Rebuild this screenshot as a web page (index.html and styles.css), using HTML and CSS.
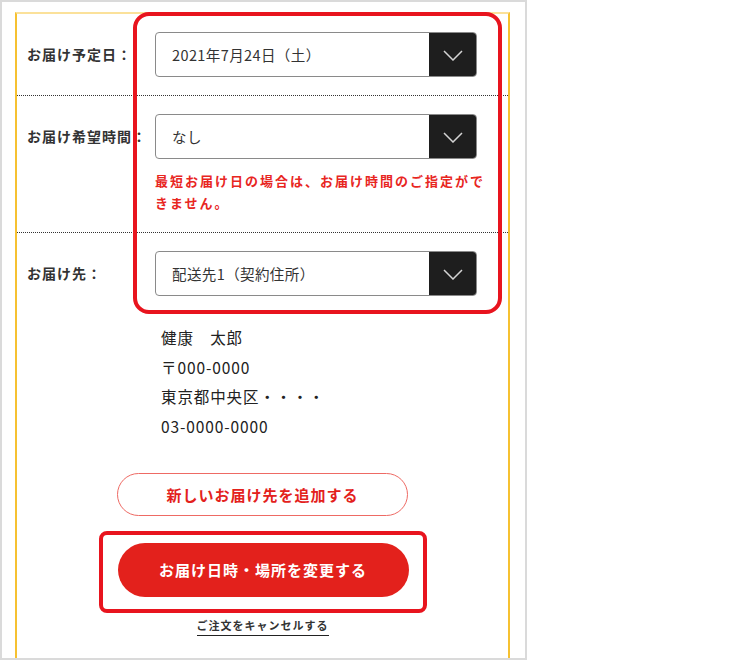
FILE: index.html
```html
<!DOCTYPE html>
<html lang="ja">
<head>
  <meta charset="UTF-8" />
  <meta name="viewport" content="width=device-width, initial-scale=1" />
  <title>お届け日時・場所の変更</title>
  <link rel="stylesheet" href="styles.css">
</head>
<body>
  <div class="frame">
    <div class="panel">
      <div class="row">
        <div class="label">お届け予定日：</div>
        <div class="field">
          <div class="select">
            <span class="select-text">2021年7月24日（土）</span>
            <span class="select-arrow">
              <svg width="20" height="11" viewBox="0 0 20 11"><polyline points="1,1 10,10 19,1" fill="none" stroke="#d4d4d4" stroke-width="1.5"/></svg>
            </span>
          </div>
        </div>
      </div>

      <div class="row">
        <div class="label">お届け希望時間：</div>
        <div class="field">
          <div class="select">
            <span class="select-text">なし</span>
            <span class="select-arrow">
              <svg width="20" height="11" viewBox="0 0 20 11"><polyline points="1,1 10,10 19,1" fill="none" stroke="#d4d4d4" stroke-width="1.5"/></svg>
            </span>
          </div>
          <p class="error">最短お届け日の場合は、お届け時間のご指定がで<br>きません。</p>
        </div>
      </div>

      <div class="row last">
        <div class="label">お届け先：</div>
        <div class="field">
          <div class="select">
            <span class="select-text">配送先1（契約住所）</span>
            <span class="select-arrow">
              <svg width="20" height="11" viewBox="0 0 20 11"><polyline points="1,1 10,10 19,1" fill="none" stroke="#d4d4d4" stroke-width="1.5"/></svg>
            </span>
          </div>
        </div>
      </div>

      <div class="address">
        <p>健康　太郎</p>
        <p>〒000-0000</p>
        <p>東京都中央区・・・・</p>
        <p>03-0000-0000</p>
      </div>

      <div class="actions">
        <button class="btn btn-outline">新しいお届け先を追加する</button>
        <div class="mark mark-button">
          <button class="btn btn-primary">お届け日時・場所を変更する</button>
        </div>
        <a class="cancel" href="#">ご注文をキャンセルする</a>
      </div>
    </div>

    <div class="mark mark-form"></div>
  </div>
</body>
</html>
```

FILE: styles.css
```css
* {
  box-sizing: border-box;
}
body {
  margin: 0;
  background: #fff;
  color: #222;
  font-family: "Noto Sans CJK JP", "Noto Sans", sans-serif;
}
p {
  margin: 0;
}
.frame {
  position: relative;
  width: 527px;
  height: 660px;
  border: 2px solid #dadada;
  padding: 10px 0 0 13px;
  overflow: hidden;
}
.panel {
  width: 495px;
  height: 700px;
  border: 2px solid #f6c131;
  border-top-color: #fbe19a;
  border-bottom: none;
}
.row {
  display: flex;
  align-items: flex-start;
  padding: 18px 31px 18px 10px;
  border-bottom: 1px dotted #333;
}
.row.last {
  border-bottom: none;
  padding-bottom: 0;
}
.label {
  width: 128px;
  flex-shrink: 0;
  height: 45px;
  line-height: 45px;
  font-size: 14px;
  font-weight: 700;
  letter-spacing: 1px;
  color: #333;
  white-space: nowrap;
}
.field {
  flex: 1;
}
.select {
  display: flex;
  height: 45px;
  border: 1px solid #8a8a8a;
  border-radius: 4px;
  overflow: hidden;
}
.select-text {
  flex: 1;
  padding-left: 16px;
  line-height: 43px;
  font-size: 14.5px;
  letter-spacing: 0.4px;
  color: #333;
}
.select-arrow {
  width: 47px;
  background: #1e1e1e;
  display: flex;
  align-items: center;
  justify-content: center;
  padding-top: 2px;
}
.error {
  margin-top: 11px;
  margin-right: -20px;
  font-size: 13px;
  line-height: 22px;
  letter-spacing: 2px;
  font-weight: 700;
  color: #e8261f;
}
.address {
  padding: 27px 0 0 144px;
  font-size: 15.5px;
  line-height: 29.7px;
  letter-spacing: 0.9px;
  color: #222;
}
.actions {
  display: flex;
  flex-direction: column;
  align-items: center;
  padding-top: 31px;
}
.btn {
  width: 291px;
  border-radius: 30px;
  font-family: inherit;
  font-size: 15px;
  font-weight: 700;
  letter-spacing: 1px;
  cursor: pointer;
}
.btn-outline {
  height: 43px;
  background: #fff;
  color: #e3211c;
  border: 1.5px solid #ee6a64;
}
.btn-primary {
  display: block;
  height: 54px;
  background: #e3211c;
  color: #fff;
  border: none;
}
.mark {
  border: 4px solid #e8141e;
}
.mark-button {
  margin-top: 15px;
  padding: 8px 14px 12px 15px;
  border-radius: 8px;
}
.mark-form {
  position: absolute;
  left: 131px;
  top: 10px;
  width: 369px;
  height: 302px;
  border-radius: 16px;
}
.cancel {
  margin-top: 4px;
  padding-bottom: 2px;
  font-size: 11px;
  font-weight: 700;
  letter-spacing: 1px;
  color: #333;
  text-decoration: none;
  border-bottom: 1.5px solid #222;
}
```
